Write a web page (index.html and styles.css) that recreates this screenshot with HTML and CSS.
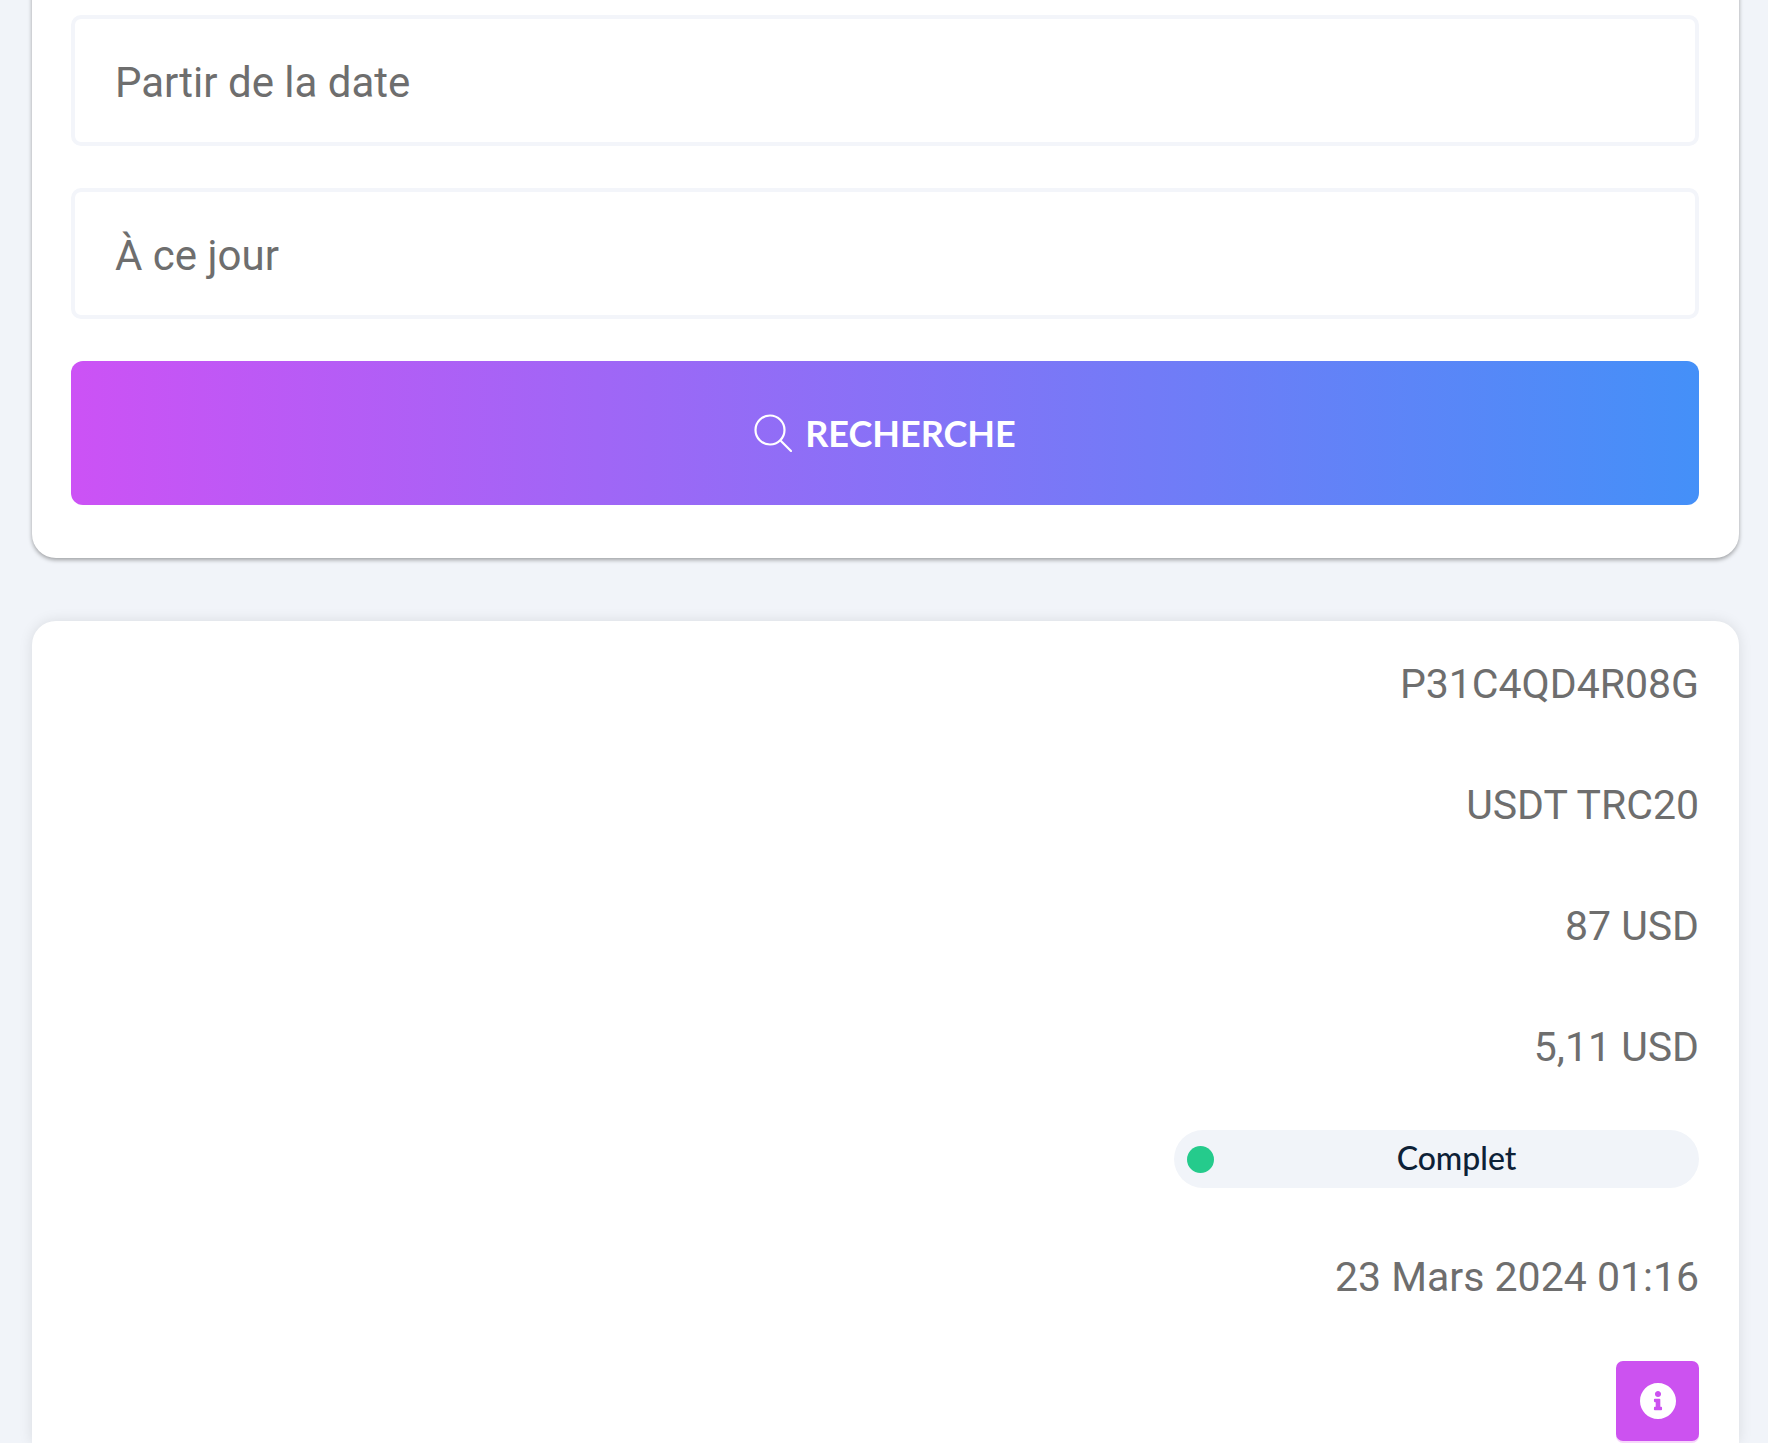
FILE: index.html
```html
<html lang="fr">
<head>
    <meta charset="UTF-8"/>
    <meta name="viewport" content="width=device-width, initial-scale=1.0"/>
    <title>Historique</title>
    <link rel="stylesheet" href="styles.css">
</head>
<body>

<div class="page">
    <div class="card search_card">
        <input class="date_input" type="text" placeholder="Partir de la date">
        <input class="date_input" type="text" placeholder="À ce jour">
        <button class="search_button" type="submit">
            <svg class="search_icon" viewBox="0 0 38 38" fill="none" stroke="currentColor" stroke-width="2.2" stroke-linecap="round">
                <circle cx="16" cy="16" r="14.5"/>
                <path d="M26.5 26.5L37 37"/>
            </svg>
            <span>RECHERCHE</span>
        </button>
    </div>

    <div class="card result_card">
        <div class="result_row">P31C4QD4R08G</div>
        <div class="result_row">USDT TRC20</div>
        <div class="result_row">87 USD</div>
        <div class="result_row">5,11 USD</div>
        <div class="status_row">
            <div class="status_pill">
                <span class="status_dot"></span>
                <span class="status_text">Complet</span>
            </div>
        </div>
        <div class="result_row">23 Mars 2024 01:16</div>
        <div class="action_row">
            <a class="info_button" href="#" aria-label="Info">
                <svg class="info_icon" viewBox="8 8 496 496" fill="currentColor">
                    <path d="M256 8C119.043 8 8 119.083 8 256c0 136.997 111.043 248 248 248s248-111.003 248-248C504 119.083 392.957 8 256 8zm0 110c23.196 0 42 18.804 42 42s-18.804 42-42 42-42-18.804-42-42 18.804-42 42-42zm56 254c0 6.627-5.373 12-12 12h-88c-6.627 0-12-5.373-12-12v-24c0-6.627 5.373-12 12-12h12v-64h-12c-6.627 0-12-5.373-12-12v-24c0-6.627 5.373-12 12-12h64c6.627 0 12 5.373 12 12v100h12c6.627 0 12 5.373 12 12v24z"/>
                </svg>
            </a>
        </div>
    </div>
</div>

</body>
</html>
```

FILE: styles.css
```css
html, body {
    margin: 0;
    height: 1443px;
    overflow: hidden;
    background-color: #f1f4f9;
}

body {
    font-family: Roboto, 'Liberation Sans', sans-serif;
}

.page {
    padding: 0 29px 0 32px;
    margin-top: -40px;
}

.card {
    background-color: #fff;
    border-radius: 24px;
    padding: 0 40px 0 39px;
}

.search_card {
    display: flex;
    flex-direction: column;
    gap: 42px;
    padding-top: 55px;
    padding-bottom: 53px;
    box-shadow: 0 2px 4px rgba(0, 0, 0, 0.35);
}

.date_input {
    box-sizing: border-box;
    height: 131px;
    width: 100%;
    padding: 3px 40px 0;
    border: 4px solid #f3f5fa;
    border-radius: 10px;
    outline: none;
    background-color: #fff;
    font-family: Roboto, sans-serif;
    font-size: 42px;
    font-weight: 400;
    color: #6e6e6e;
}

.date_input::placeholder {
    color: #6e6e6e;
    opacity: 1;
}

.search_button {
    display: flex;
    justify-content: center;
    align-items: center;
    gap: 13px;
    height: 144px;
    border: none;
    border-radius: 12px;
    background: linear-gradient(to right, #cc52f5, #4490f8);
    color: #fff;
    font-family: Lato, sans-serif;
    font-size: 36px;
    font-weight: 700;
}

.search_icon {
    width: 38px;
    height: 38px;
}

.result_card {
    box-sizing: border-box;
    height: 822px;
    margin-top: 63px;
    padding-top: 3px;
    border-radius: 24px 24px 0 0;
    box-shadow: 0 0 14px rgba(0, 0, 0, 0.1);
}

.result_row {
    padding: 36px 0;
    line-height: 49px;
    text-align: right;
    font-size: 41px;
    font-weight: 400;
    color: #6e6e6e;
}

.status_row {
    padding: 22px 0 29px;
}

.status_pill {
    display: flex;
    align-items: center;
    box-sizing: border-box;
    width: 525px;
    height: 58px;
    margin-left: auto;
    padding-left: 13px;
    border-radius: 29px;
    background-color: #f1f4f9;
}

.status_dot {
    width: 27px;
    height: 27px;
    border-radius: 50%;
    background-color: #25cb8c;
}

.status_text {
    flex: 1;
    padding-bottom: 4px;
    text-align: center;
    font-family: Lato, sans-serif;
    font-size: 32px;
    font-weight: 500;
    color: #0d2137;
}

.action_row {
    display: flex;
    justify-content: flex-end;
    padding-top: 23px;
}

.info_button {
    display: flex;
    justify-content: center;
    align-items: center;
    width: 83px;
    height: 80px;
    border-radius: 7px;
    background-color: #cc52f0;
    color: #fff;
    box-shadow: 0 2px 0 #f7d6fb;
}

.info_icon {
    width: 36px;
    height: 36px;
}
```
